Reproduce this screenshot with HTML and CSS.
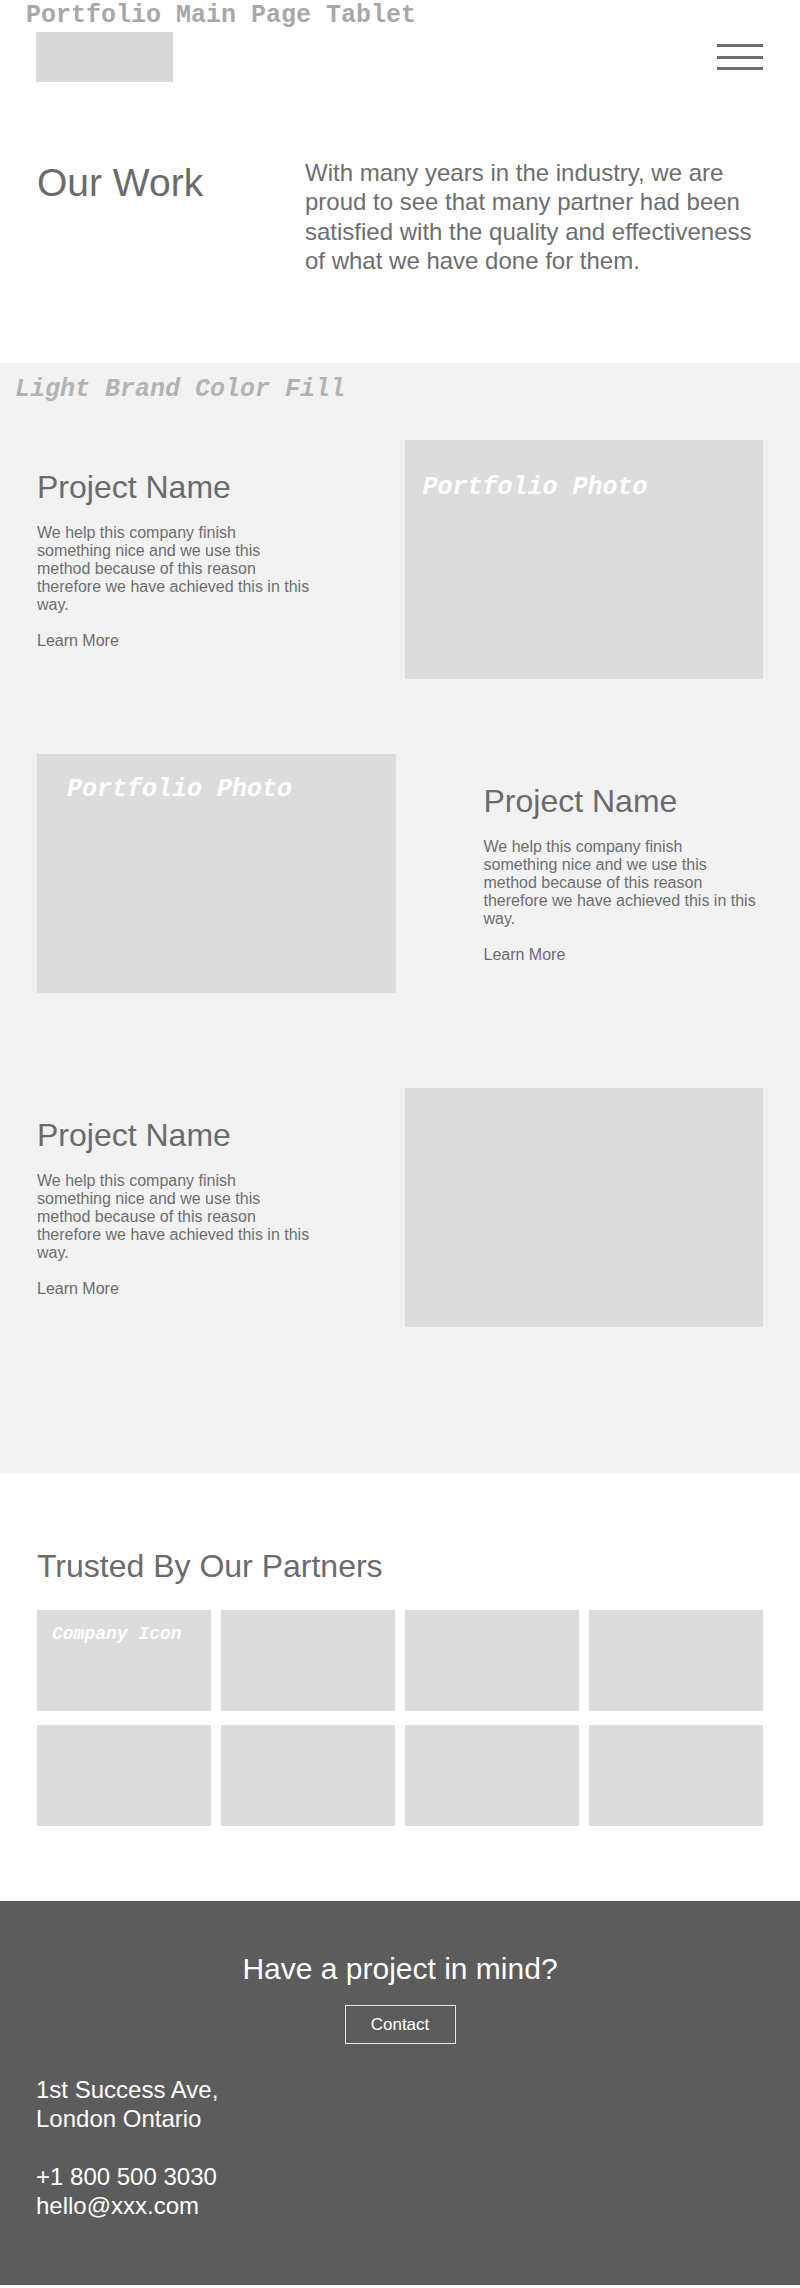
FILE: index.html
```html
<!DOCTYPE html>
<html lang="en">
<head>
<meta charset="utf-8">
<title>Portfolio Main Page Tablet</title>
<link rel="stylesheet" href="styles.css">
</head>
<body>
<header class="site-header">
  <p class="page-title">Portfolio Main Page Tablet</p>
  <nav class="nav">
    <div class="logo"></div>
    <button class="menu" type="button" aria-label="Menu"><span></span><span></span><span></span></button>
  </nav>
</header>

<section class="intro">
  <h1 class="intro-title">Our Work</h1>
  <p class="intro-text">With many years in the industry, we are proud to see that many partner had been satisfied with the quality and effectiveness of what we have done for them.</p>
</section>

<section class="work">
  <p class="annot">Light Brand Color Fill</p>

  <article class="project project--first">
    <div class="project-cell">
      <div class="project-text">
        <h2 class="project-name">Project Name</h2>
        <p class="project-desc">We help this company finish something nice and we use this method because of this reason therefore we have achieved this in this way.</p>
        <a class="learn-more" href="#">Learn More</a>
      </div>
    </div>
    <div class="photo photo--a"><span class="photo-label">Portfolio Photo</span></div>
  </article>

  <article class="project project--second">
    <div class="photo photo--b"><span class="photo-label">Portfolio Photo</span></div>
    <div class="project-cell project-cell--right">
      <div class="project-text">
        <h2 class="project-name">Project Name</h2>
        <p class="project-desc">We help this company finish something nice and we use this method because of this reason therefore we have achieved this in this way.</p>
        <a class="learn-more" href="#">Learn More</a>
      </div>
    </div>
  </article>

  <article class="project project--third">
    <div class="project-cell">
      <div class="project-text">
        <h2 class="project-name">Project Name</h2>
        <p class="project-desc">We help this company finish something nice and we use this method because of this reason therefore we have achieved this in this way.</p>
        <a class="learn-more" href="#">Learn More</a>
      </div>
    </div>
    <div class="photo"></div>
  </article>
</section>

<section class="partners">
  <h2 class="partners-title">Trusted By Our Partners</h2>
  <div class="partner-grid">
    <div class="tile"><span class="tile-label">Company Icon</span></div>
    <div class="tile"></div>
    <div class="tile"></div>
    <div class="tile"></div>
    <div class="tile"></div>
    <div class="tile"></div>
    <div class="tile"></div>
    <div class="tile"></div>
  </div>
</section>

<footer class="footer">
  <h2 class="footer-title">Have a project in mind?</h2>
  <a class="contact-btn" href="#">Contact</a>
  <div class="contact-info">
    <p class="info-block">1st Success Ave,<br>London Ontario</p>
    <p class="info-block">+1 800 500 3030<br>hello@xxx.com</p>
  </div>
</footer>
</body>
</html>
```

FILE: styles.css
```css
* { box-sizing: border-box; }

html, body {
  margin: 0;
  padding: 0;
  background: #ffffff;
}

body {
  font-family: "Liberation Sans", Arial, Helvetica, sans-serif;
  color: #6f6f6f;
}

/* ---------- header ---------- */
.page-title {
  margin: 0;
  padding: 2px 0 0 26px;
  font-family: "Liberation Mono", "Courier New", monospace;
  font-weight: bold;
  font-size: 25px;
  line-height: 28px;
  color: #a8a8a8;
}

.nav {
  margin-top: 2px;
  padding: 0 37px 0 36px;
  display: flex;
  justify-content: space-between;
  align-items: center;
}

.logo {
  width: 137px;
  height: 50px;
  background: #d9d9d9;
}

.menu {
  width: 46px;
  padding: 0;
  border: 0;
  background: transparent;
  display: flex;
  flex-direction: column;
  gap: 8.7px;
}

.menu span {
  display: block;
  height: 3px;
  background: #6e6e6e;
}

/* ---------- intro ---------- */
.intro {
  padding: 76px 37px 88px;
  display: grid;
  grid-template-columns: 268px 1fr;
  align-items: start;
}

.intro-title {
  margin: 2px 0 0;
  font-weight: normal;
  font-size: 39px;
  line-height: 45px;
  color: #6b6b6b;
}

.intro-text {
  margin: 0;
  font-size: 24px;
  line-height: 29.3px;
  color: #6e6e6e;
}

/* ---------- work ---------- */
.work {
  background: #f2f2f2;
  padding: 13px 37px 146px;
}

.annot {
  margin: 0 0 0 -22px;
  font-family: "Liberation Mono", "Courier New", monospace;
  font-style: italic;
  font-weight: bold;
  font-size: 25px;
  line-height: 28px;
  color: #b3b3b3;
}

.project {
  display: grid;
  grid-template-columns: 1fr 1fr;
  column-gap: 9px;
  align-items: center;
}

.project--first { margin-top: 36px; }
.project--second { margin-top: 75px; }
.project--third { margin-top: 95px; }

.project-cell--right {
  padding-left: 79px;
}

.project-text {
  width: 273px;
}

.project-name {
  margin: 0 0 18px;
  font-weight: normal;
  font-size: 32px;
  line-height: 37px;
  color: #6b6b6b;
}

.project-desc {
  margin: 0 0 18px;
  font-size: 16px;
  line-height: 18px;
  color: #6e6e6e;
}

.learn-more {
  display: block;
  font-size: 16px;
  line-height: 18px;
  color: #6b6b6b;
  text-decoration: none;
}

.photo {
  height: 239px;
  background: #dcdcdc;
}

.photo-label {
  display: block;
  font-family: "Liberation Mono", "Courier New", monospace;
  font-style: italic;
  font-weight: bold;
  font-size: 25px;
  line-height: 28px;
  color: #ffffff;
}

.photo--a { padding: 34px 0 0 18px; }
.photo--b { padding: 22px 0 0 30px; }

/* ---------- partners ---------- */
.partners {
  padding: 75px 37px 75px;
}

.partners-title {
  margin: 0 0 25px;
  font-weight: normal;
  font-size: 32px;
  line-height: 37px;
  color: #6b6b6b;
}

.partner-grid {
  display: grid;
  grid-template-columns: repeat(4, 1fr);
  grid-auto-rows: 101px;
  column-gap: 10px;
  row-gap: 14px;
}

.tile {
  background: #dcdcdc;
  padding: 14px 0 0 15px;
}

.tile-label {
  font-family: "Liberation Mono", "Courier New", monospace;
  font-style: italic;
  font-weight: bold;
  font-size: 18px;
  line-height: 20px;
  color: #ffffff;
}

/* ---------- footer ---------- */
.footer {
  background: #5c5c5c;
  color: #ffffff;
  padding: 50px 36px 65px;
  display: flex;
  flex-direction: column;
  align-items: center;
}

.footer-title {
  margin: 0;
  font-weight: normal;
  font-size: 30px;
  line-height: 36px;
  color: #ffffff;
}

.contact-btn {
  margin-top: 18px;
  width: 111px;
  height: 39px;
  border: 1px solid #e8e8e8;
  display: flex;
  align-items: center;
  justify-content: center;
  font-size: 17px;
  line-height: 20px;
  color: #ffffff;
  text-decoration: none;
}

.contact-info {
  align-self: stretch;
  margin-top: 31px;
}

.info-block {
  margin: 0;
  font-size: 24px;
  line-height: 29px;
  color: #ffffff;
}

.info-block + .info-block {
  margin-top: 29px;
}
```
